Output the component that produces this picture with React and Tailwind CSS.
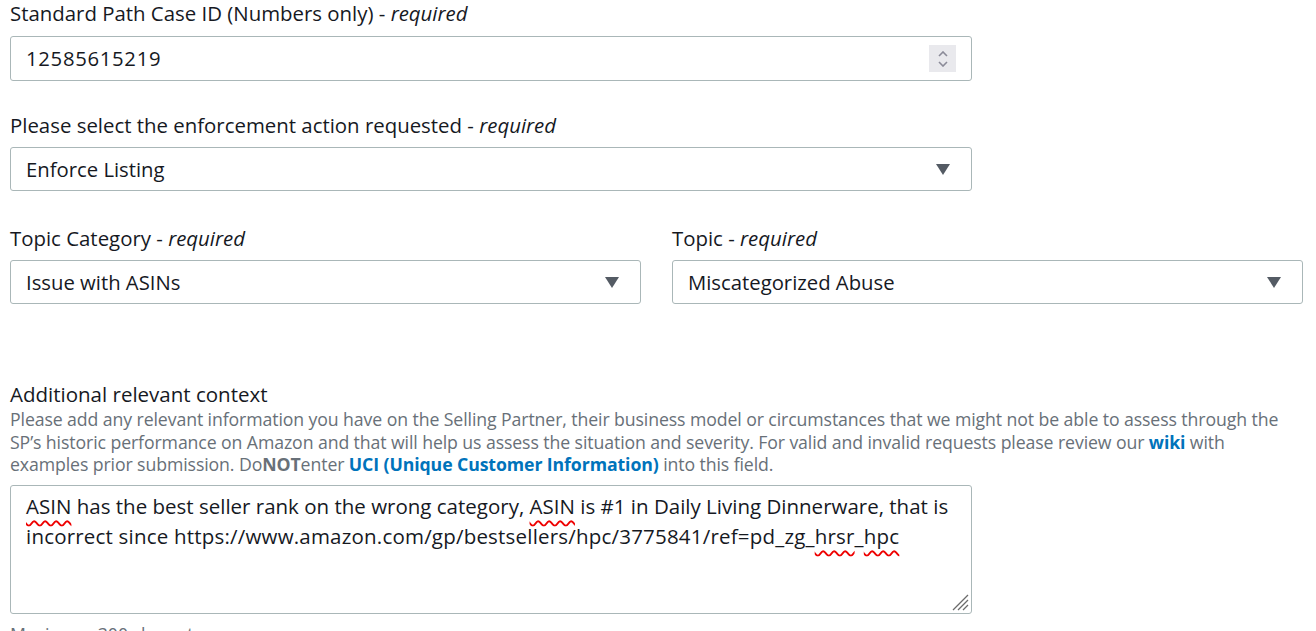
import { useState } from 'react';

const labelFont = { fontFamily: '"Open Sans", "Noto Sans", sans-serif' };

const Caret = () => (
  <svg width="14" height="11" viewBox="0 0 14 11" className="shrink-0">
    <path d="M0 0 H14 L7 11 Z" fill="#545b64" />
  </svg>
);

const Label = ({ text, required }) => (
  <div className="text-[20.4px] leading-[26px] text-[#16191f]">
    {text}
    {required && (
      <>
        {' - '}
        <span className="italic">required</span>
      </>
    )}
  </div>
);

const Select = ({ value, width }) => (
  <div
    className={`${width} h-[44px] mt-[9px] border border-[#aab7b8] rounded-[3px] bg-white flex items-center justify-between pl-[15px] pr-[21px]`}
  >
    <span className="text-[20.3px] text-[#16191f]">{value}</span>
    <Caret />
  </div>
);

const Squiggle = ({ children }) => (
  <span className="underline decoration-wavy decoration-[#e00] decoration-[1.5px] underline-offset-[6px]">
    {children}
  </span>
);

const App = () => {
  const [caseId] = useState('12585615219');

  return (
    <div className="w-[1316px] h-[631px] overflow-hidden bg-white pl-[10px]" style={labelFont}>
      {/* Case ID */}
      <Label text="Standard Path Case ID (Numbers only)" required />
      <div className="w-[962px] h-[45px] mt-[10px] border border-[#aab7b8] rounded-[3px] bg-white flex items-center justify-between pl-[15px] pr-[15px]">
        <span className="text-[20.3px] text-[#16191f] tracking-[0.7px]">{caseId}</span>
        <div className="w-[27px] h-[27px] bg-[#e9e9ed] flex flex-col items-center justify-center gap-[1px]">
          <svg width="10" height="6" viewBox="0 0 10 6">
            <path d="M1 5 L5 1 L9 5" stroke="#8a8a98" strokeWidth="1.6" fill="none" />
          </svg>
          <svg width="10" height="6" viewBox="0 0 10 6" className="mt-[3px]">
            <path d="M1 1 L5 5 L9 1" stroke="#8a8a98" strokeWidth="1.6" fill="none" />
          </svg>
        </div>
      </div>

      {/* Enforcement action */}
      <div className="mt-[31px]">
        <Label text="Please select the enforcement action requested" required />
        <Select value="Enforce Listing" width="w-[962px]" />
      </div>

      {/* Topic row */}
      <div className="mt-[34px] flex gap-[31px]">
        <div>
          <Label text="Topic Category" required />
          <Select value="Issue with ASINs" width="w-[631px]" />
        </div>
        <div>
          <Label text="Topic" required />
          <Select value="Miscategorized Abuse" width="w-[631px]" />
        </div>
      </div>

      {/* Additional context */}
      <div className="mt-[77px]">
        <div className="text-[20.5px] leading-[26px] text-[#16191f]">Additional relevant context</div>
        <p className="w-[1290px] text-[17.7px] leading-[22.5px] text-[#687078] tracking-[-0.1px] mt-[1px]">
          Please add any relevant information you have on the Selling Partner, their business model or
          circumstances that we might not be able to assess through the SP’s historic performance on Amazon
          and that will help us assess the situation and severity. For valid and invalid requests please
          review our <a className="font-bold text-[#0073bb]">wiki</a> with examples prior submission. Do
          <span className="font-bold">NOT</span>enter{' '}
          <a className="font-bold text-[#0073bb]">UCI (Unique Customer Information)</a> into this field.
        </p>
        <div className="relative w-[962px] h-[129px] mt-[9px] border border-[#aab7b8] rounded-[3px] bg-white pl-[15px] pr-[10px] pt-[5px]">
          <div className="text-[20.5px] leading-[30px] text-[#16191f]">
            <Squiggle>ASIN</Squiggle> has the best seller rank on the wrong category, <Squiggle>ASIN</Squiggle> is
            #1 in Daily Living Dinnerware, that is{' '}
            <span className="tracking-[0.2px]">
              incorrect since https://www.amazon.com/gp/bestsellers/hpc/3775841/ref=pd_zg_
              <Squiggle>hrsr</Squiggle>_<Squiggle>hpc</Squiggle>
            </span>
          </div>
          <svg width="20" height="20" viewBox="0 0 20 20" className="absolute right-[2px] bottom-[2px]">
            <path d="M4 19 L19 4 M9 19 L19 9 M14 19 L19 14" stroke="#6b6b6b" strokeWidth="1.3" />
          </svg>
        </div>
        <div className="mt-[9px] text-[17.7px] leading-[23px] text-[#687078]">Maximum 300 characters</div>
      </div>
    </div>
  );
};

export default App;
